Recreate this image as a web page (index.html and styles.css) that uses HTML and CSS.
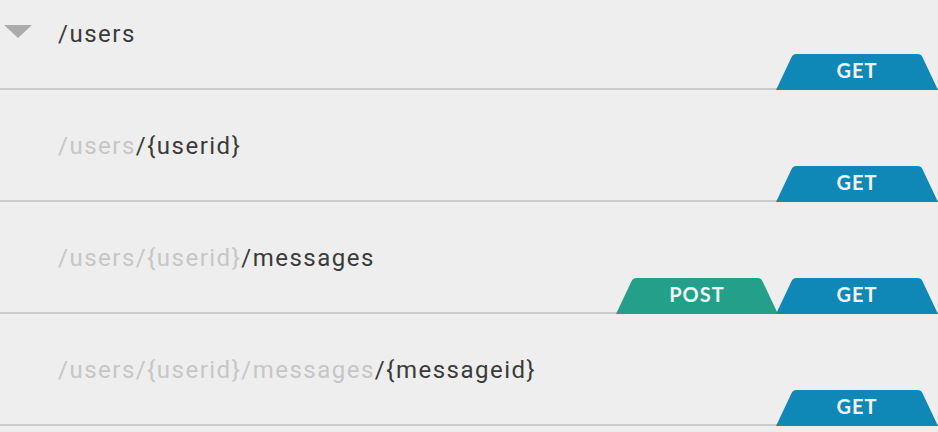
FILE: index.html
```html
<!DOCTYPE html>
<html lang="en">
<head>
<meta charset="utf-8">
<title>Resources</title>
<link rel="stylesheet" href="styles.css">
</head>
<body>
<div class="resources">
  <div class="row row-first">
    <div class="path"><span class="caret"></span><span class="cur">/users</span></div>
    <div class="methods"><span class="tab get">GET</span></div>
  </div>
  <div class="row">
    <div class="path indent"><span class="parent">/users</span><span class="cur">/{userid}</span></div>
    <div class="methods"><span class="tab get">GET</span></div>
  </div>
  <div class="row">
    <div class="path indent"><span class="parent">/users/{userid}</span><span class="cur">/messages</span></div>
    <div class="methods"><span class="tab post">POST</span><span class="tab get">GET</span></div>
  </div>
  <div class="row">
    <div class="path indent"><span class="parent">/users/{userid}/messages</span><span class="cur">/{messageid}</span></div>
    <div class="methods"><span class="tab get">GET</span></div>
  </div>
</div>
</body>
</html>
```
FILE: styles.css
```css
html, body {
  margin: 0;
  padding: 0;
  background: #eeeeee;
}
body {
  font-family: Roboto, "Liberation Sans", sans-serif;
}
.resources {
  display: flex;
  flex-direction: column;
}
.row {
  height: 110px;
  border-bottom: 2px solid #cbcbcb;
  display: flex;
  flex-direction: column;
  justify-content: flex-end;
}
.row-first {
  height: 88px;
}
.path {
  display: flex;
  align-items: flex-start;
  font-size: 24px;
  line-height: 30px;
  letter-spacing: 1.5px;
  margin-bottom: 5px;
  padding-left: 4px;
  white-space: nowrap;
}
.path.indent {
  padding-left: 58px;
}
.caret {
  width: 0;
  height: 0;
  border-left: 14px solid transparent;
  border-right: 14px solid transparent;
  border-top: 13px solid #ababab;
  margin-top: 6px;
  margin-right: 26px;
}
.parent {
  color: #c6c6c6;
}
.cur {
  color: #3a3a3a;
}
.methods {
  height: 36px;
  margin-bottom: -2px;
  display: flex;
  justify-content: flex-end;
}
.tab {
  width: 162px;
  height: 36px;
  font-family: Lato, "Liberation Sans", sans-serif;
  font-weight: 700;
  font-size: 20px;
  line-height: 32px;
  letter-spacing: 1px;
  color: #f2f6f8;
  text-align: center;
  clip-path: path('M0 36 L15.5 3.2 Q17 0 20.5 0 L141.5 0 Q145 0 146.5 3.2 L162 36 Z');
}
.get {
  background: #0f88b8;
}
.post {
  background: #24a08a;
  margin-right: -2px;
}
```
